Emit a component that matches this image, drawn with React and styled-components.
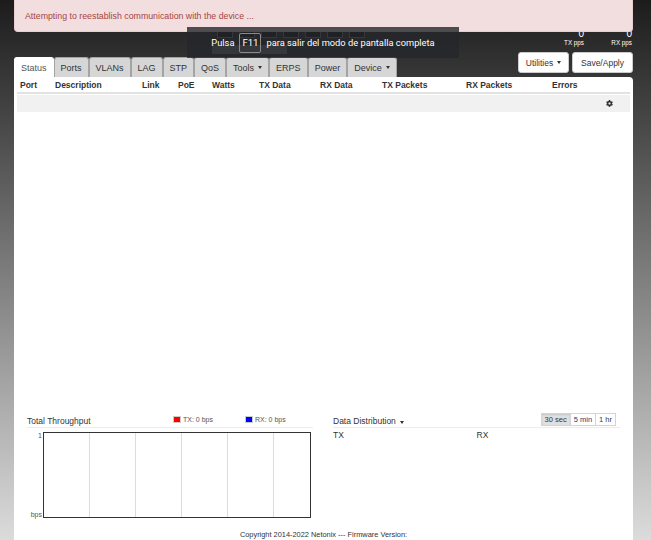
import React from "react";
import styled, { createGlobalStyle, css } from "styled-components";
import { FaCog } from "react-icons/fa";

const GlobalStyle = createGlobalStyle`
  html, body {
    margin: 0;
    padding: 0;
  }
  body {
    font-family: "Liberation Sans", Arial, sans-serif;
    color: #333;
  }
  * {
    box-sizing: border-box;
  }
`;

const Page = styled.div`
  background: linear-gradient(#1c1c1c, #dcdcdc);
  min-height: 540px;
  overflow: hidden;
  padding: 0 18px 0 14px;
  position: relative;
`;

const Alert = styled.div`
  align-items: center;
  background-color: #f2dede;
  border: 1px solid #ebccd1;
  border-radius: 0 0 4px 4px;
  border-top: none;
  color: #a94442;
  display: flex;
  font-size: 8.8px;
  height: 32px;
  left: 14px;
  padding-left: 10px;
  position: absolute;
  top: 0;
  width: 619px;
  z-index: 2;
`;

const FullscreenHint = styled.div`
  align-items: center;
  background-color: rgba(38, 39, 43, 0.8);
  color: #fff;
  display: flex;
  font-family: Roboto, "Noto Sans", sans-serif;
  font-size: 9.3px;
  gap: 5px;
  height: 31px;
  justify-content: center;
  left: 187px;
  position: absolute;
  top: 27px;
  width: 272px;
  z-index: 3;
`;

const Key = styled.span`
  align-items: center;
  border: 1px solid #8a8a8a;
  border-radius: 2px;
  display: flex;
  font-size: 9.6px;
  height: 20px;
  justify-content: center;
  width: 22px;
`;

const Top = styled.div`
  display: flex;
  height: 77px;
`;

const LeftCol = styled.div`
  display: flex;
  flex: 1;
  flex-direction: column;
`;

const SwitchGraphic = styled.div`
  display: flex;
  flex-direction: column;
  gap: 7px;
  margin-left: 198px;
  padding-top: 29px;
`;

const PortRow = styled.div`
  display: flex;
  gap: 6px;
  margin-left: 5px;
`;

const PortBox = styled.div`
  background-color: #0a0a0a;
  border: 1px solid #777;
  border-top: none;
  height: 9px;
  width: 16px;
`;

const SwitchBar = styled.div`
  background-color: #777;
  height: 9px;
  width: 75px;
`;

const Tabs = styled.div`
  display: flex;
  margin-top: auto;
`;

const Tab = styled.div`
  align-items: center;
  background-color: #d6d6d6;
  border: 1px solid #a4a4a4;
  border-bottom: none;
  border-radius: 3px 3px 0 0;
  color: #333;
  display: flex;
  font-size: 9px;
  height: 20px;
  padding: 0 6px;
  white-space: nowrap;

  ${props =>
    props.active &&
    css`
      background-color: #fff;
      border-color: #fff;
      color: #555;
    `};
`;

const Caret = styled.span`
  border-left: 2.5px solid transparent;
  border-right: 2.5px solid transparent;
  border-top: 3px solid currentColor;
  display: inline-block;
  margin-left: 4px;
`;

const RightCol = styled.div`
  align-items: flex-end;
  display: flex;
  flex-direction: column;
  width: 115px;
`;

const PpsRow = styled.div`
  display: flex;
  gap: 26px;
  margin-right: 1px;
  padding-top: 29px;
`;

const Pps = styled.div`
  color: #fff;
  text-align: right;
  width: 22px;

  b {
    display: block;
    font-size: 10px;
    font-weight: normal;
    line-height: 10px;
  }

  span {
    display: block;
    font-size: 6.3px;
    line-height: 7px;
  }
`;

const ButtonRow = styled.div`
  display: flex;
  gap: 3px;
  margin-top: 6px;
`;

const Button = styled.div`
  align-items: center;
  background-color: #fff;
  border: 1px solid #ccc;
  border-radius: 3px;
  color: #333;
  display: flex;
  font-size: 8.5px;
  height: 21px;
  justify-content: center;
  width: ${props => props.width}px;
`;

const Panel = styled.div`
  background-color: #fff;
  border-radius: 0 4px 0 0;
  min-height: 463px;
`;

const TableArea = styled.div`
  height: 334px;
  padding: 1px 3px 0;
`;

const columns = "35px 87px 36px 34px 47px 61px 62px 84px 86px 48px 1fr";

const HeadRow = styled.div`
  align-items: center;
  border-bottom: 2px solid #e2e2e2;
  display: grid;
  font-size: 8.5px;
  font-weight: bold;
  grid-template-columns: ${columns};
  height: 16px;

  span {
    padding-left: 3px;
  }
`;

const BodyRow = styled.div`
  align-items: center;
  background-color: #f1f1f1;
  display: grid;
  grid-template-columns: ${columns};
  height: 17px;
  margin-top: 1px;
`;

const GearCell = styled.div`
  color: #333;
  display: flex;
  grid-column: 11;
  padding-left: 9px;
`;

const Charts = styled.div`
  display: flex;
  gap: 20px;
  height: 118px;
  padding: 0 13px;
`;

const ChartBlock = styled.div`
  width: ${props => props.width}px;
`;

const ChartHeader = styled.div`
  align-items: center;
  border-bottom: 1px solid #ececec;
  display: flex;
  height: 17px;
`;

const ChartTitle = styled.div`
  color: #333;
  flex: ${props => (props.fixed ? "0 0 146px" : "1")};
  font-size: 8.5px;
  padding-top: 3px;
`;

const LegendItem = styled.div`
  align-items: center;
  color: #555;
  display: flex;
  font-size: 7px;
  gap: 2px;
  margin-right: 32px;
  white-space: nowrap;
`;

const Swatch = styled.span`
  background-color: ${props => props.color};
  border: 1px solid #ccc;
  display: inline-block;
  height: 7px;
  width: 8px;
`;

const Plot = styled.div`
  display: flex;
  margin-top: 4px;
`;

const YAxis = styled.div`
  color: #555;
  display: flex;
  flex-direction: column;
  font-size: 7px;
  justify-content: space-between;
  text-align: right;
  width: 16px;

  span {
    line-height: 7px;
    padding-right: 1px;
  }
`;

const PlotBox = styled.div`
  background: repeating-linear-gradient(
    to right,
    transparent 0 45px,
    #dcdcdc 45px 46px
  );
  border: 1.5px solid #333;
  height: 86px;
  width: 268px;
`;

const RangeGroup = styled.div`
  align-self: flex-start;
  display: flex;
  margin-right: 4px;
  margin-top: 2px;
`;

const RangeButton = styled.div`
  align-items: center;
  background-color: ${props => (props.active ? "#e0e0e0" : "#fff")};
  border: 1px solid #d4d4d4;
  box-shadow: ${props =>
    props.active ? "inset 0 1px 2px rgba(0, 0, 0, 0.12)" : "none"};
  color: ${props => (props.active ? "#333" : "#1f3a6e")};
  display: flex;
  font-size: 7.5px;
  height: 13px;
  margin-left: -1px;
  padding: 0 3px;
`;

const DistRow = styled.div`
  display: flex;
  font-size: 8.5px;
  padding-top: 2px;

  span {
    width: 144px;
  }
`;

const Copyright = styled.div`
  color: #333;
  font-size: 7.4px;
  line-height: 12px;
  text-align: center;
`;

const tabs = [
  { label: "Status", active: true },
  { label: "Ports" },
  { label: "VLANs" },
  { label: "LAG" },
  { label: "STP" },
  { label: "QoS" },
  { label: "Tools", menu: true },
  { label: "ERPS" },
  { label: "Power" },
  { label: "Device", menu: true }
];

const heads = [
  "Port",
  "Description",
  "Link",
  "PoE",
  "Watts",
  "TX Data",
  "RX Data",
  "TX Packets",
  "RX Packets",
  "Errors",
  ""
];

export default () => (
  <Page>
    <GlobalStyle />
    <Alert>Attempting to reestablish communication with the device ...</Alert>
    <FullscreenHint>
      <span>Pulsa</span>
      <Key>F11</Key>
      <span>para salir del modo de pantalla completa</span>
    </FullscreenHint>

    <Top>
      <LeftCol>
        <SwitchGraphic>
          <PortRow>
            {[0, 1, 2, 3, 4, 5, 6].map(i => (
              <PortBox key={i} />
            ))}
          </PortRow>
          <SwitchBar />
        </SwitchGraphic>
        <Tabs>
          {tabs.map(tab => (
            <Tab key={tab.label} active={tab.active}>
              {tab.label}
              {tab.menu && <Caret />}
            </Tab>
          ))}
        </Tabs>
      </LeftCol>
      <RightCol>
        <PpsRow>
          <Pps>
            <b>0</b>
            <span>TX pps</span>
          </Pps>
          <Pps>
            <b>0</b>
            <span>RX pps</span>
          </Pps>
        </PpsRow>
        <ButtonRow>
          <Button width={51}>
            Utilities
            <Caret />
          </Button>
          <Button width={61}>Save/Apply</Button>
        </ButtonRow>
      </RightCol>
    </Top>

    <Panel>
      <TableArea>
        <HeadRow>
          {heads.map((h, i) => (
            <span key={i}>{h}</span>
          ))}
        </HeadRow>
        <BodyRow>
          <GearCell>
            <FaCog size={7} />
          </GearCell>
        </BodyRow>
      </TableArea>

      <Charts>
        <ChartBlock width={286}>
          <ChartHeader>
            <ChartTitle fixed>Total Throughput</ChartTitle>
            <LegendItem>
              <Swatch color="#f00" />
              TX: 0 bps
            </LegendItem>
            <LegendItem>
              <Swatch color="#00f" />
              RX: 0 bps
            </LegendItem>
          </ChartHeader>
          <Plot>
            <YAxis>
              <span>1</span>
              <span>bps</span>
            </YAxis>
            <PlotBox />
          </Plot>
        </ChartBlock>

        <ChartBlock width={287}>
          <ChartHeader>
            <ChartTitle>
              Data Distribution
              <Caret />
            </ChartTitle>
            <RangeGroup>
              <RangeButton active>30 sec</RangeButton>
              <RangeButton>5 min</RangeButton>
              <RangeButton>1 hr</RangeButton>
            </RangeGroup>
          </ChartHeader>
          <DistRow>
            <span>TX</span>
            <span>RX</span>
          </DistRow>
        </ChartBlock>
      </Charts>

      <Copyright>Copyright 2014-2022 Netonix --- Firmware Version:</Copyright>
    </Panel>
  </Page>
);
